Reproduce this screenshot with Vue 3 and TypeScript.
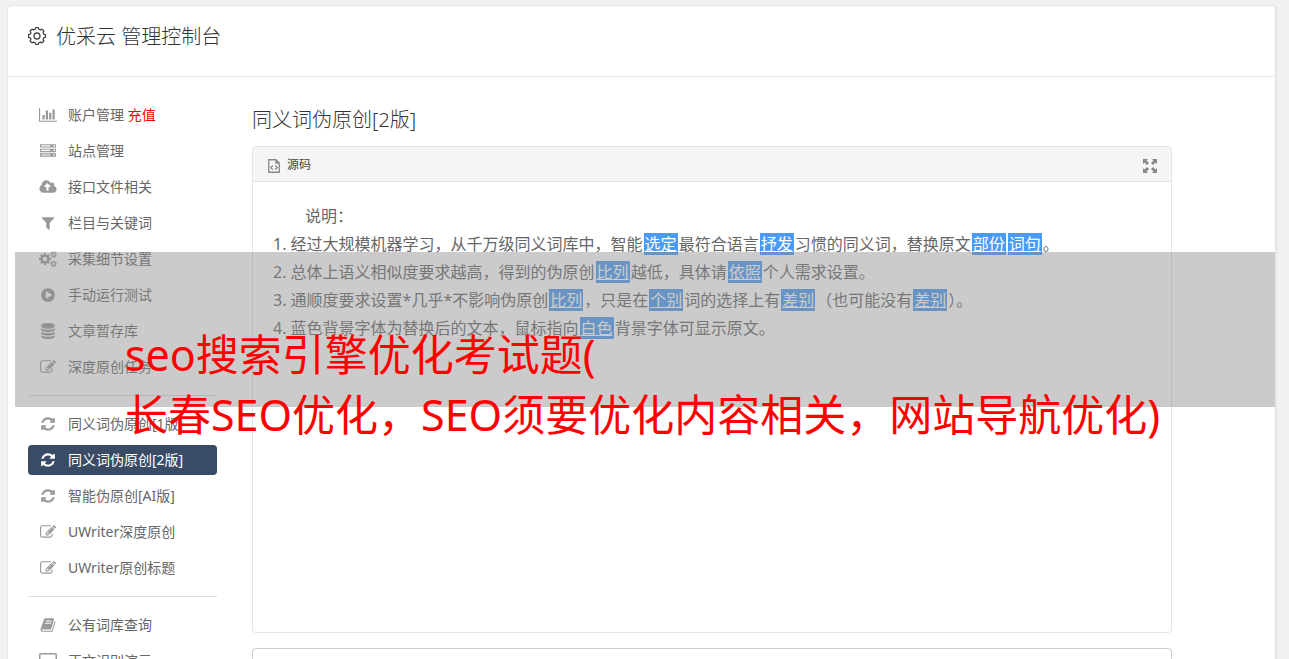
<script setup lang="ts">
interface Icon {
  box: string
  path: string
}
interface Item {
  icon: string
  label: string
  extra?: string
  active?: boolean
}
interface Segment {
  text: string
  replaced?: boolean
}

const icons: Record<string, Icon> = {
  chart: {
    box: '0 0 2048 1792',
    path: 'M640 896v512h-256v-512h256zm384-512v1024h-256v-1024h256zm1024 1152v128h-2048v-1536h128v1408h1920zm-640-896v768h-256v-768h256zm384-384v1152h-256v-1152h256z',
  },
  server: {
    box: '0 0 1792 1792',
    path: 'M128 1408h1024v-128h-1024v128zm0-512h1024v-128h-1024v128zm1568 448q0-40-28-68t-68-28-68 28-28 68 28 68 68 28 68-28 28-68zm-1568-960h1024v-128h-1024v128zm1568 448q0-40-28-68t-68-28-68 28-28 68 28 68 68 28 68-28 28-68zm0-512q0-40-28-68t-68-28-68 28-28 68 28 68 68 28 68-28 28-68zm96 832v384h-1792v-384h1792zm0-512v384h-1792v-384h1792zm0-512v384h-1792v-384h1792z',
  },
  upload: {
    box: '0 0 1920 1792',
    path: 'M1280 864q0-14-9-23l-352-352q-9-9-23-9t-23 9l-351 351q-10 12-10 24 0 14 9 23t23 9h224v352q0 13 9.5 22.5t22.5 9.5h192q13 0 22.5-9.5t9.5-22.5v-352h224q13 0 22.5-9.5t9.5-22.5zm640 288q0 159-112.5 271.5t-271.5 112.5h-1088q-185 0-316.5-131.5t-131.5-316.5q0-130 70-240t188-165q-2-30-2-43 0-212 150-362t362-150q156 0 285.5 87t188.5 231q71-62 166-62 106 0 181 75t75 181q0 76-41 138 130 31 213.5 135.5t83.5 238.5z',
  },
  filter: {
    box: '0 0 1792 1792',
    path: 'M1595 295q17 41-14 70l-493 493v742q0 42-39 59-13 5-25 5-27 0-45-19l-256-256q-19-19-19-45v-486l-493-493q-31-29-14-70 17-39 59-39h1280q42 0 59 39z',
  },
  play: {
    box: '0 0 1792 1792',
    path: 'M896 128q209 0 385.5 103t279.5 279.5 103 385.5-103 385.5-279.5 279.5-385.5 103-385.5-103-279.5-279.5-103-385.5 103-385.5 279.5-279.5 385.5-103zm384 823q32-18 32-55t-32-55l-544-320q-31-19-64-1-32 19-32 56v640q0 37 32 56 16 8 32 8 17 0 32-9z',
  },
  database: {
    box: '0 0 1792 1792',
    path: 'M896 768q237 0 443-43t325-127v170q0 69-103 128t-280 93.5-385 34.5-385-34.5-280-93.5-103-128v-170q119 84 325 127t443 43zm0 768q237 0 443-43t325-127v170q0 69-103 128t-280 93.5-385 34.5-385-34.5-280-93.5-103-128v-170q119 84 325 127t443 43zm0-384q237 0 443-43t325-127v170q0 69-103 128t-280 93.5-385 34.5-385-34.5-280-93.5-103-128v-170q119 84 325 127t443 43zm0-1152q208 0 385 34.5t280 93.5 103 128v128q0 69-103 128t-280 93.5-385 34.5-385-34.5-280-93.5-103-128v-128q0-69 103-128t280-93.5 385-34.5z',
  },
  edit: {
    box: '0 0 1792 1792',
    path: 'M888 1184l116-116-152-152-116 116v56h96v96h56zm440-720q-16-16-33 1l-350 350q-17 17-1 33t33-1l350-350q17-17 1-33zm80 594v190q0 119-84.5 203.5t-203.5 84.5h-832q-119 0-203.5-84.5t-84.5-203.5v-832q0-119 84.5-203.5t203.5-84.5h832q63 0 117 25 15 7 18 23 3 17-9 29l-49 49q-14 14-32 8-23-6-45-6h-832q-66 0-113 47t-47 113v832q0 66 47 113t113 47h832q66 0 113-47t47-113v-126q0-13 9-22l64-64q15-15 35-7t20 29zm-96-738l288 288-672 672h-288v-288zm444 132l-92 92-288-288 92-92q28-28 68-28t68 28l152 152q28 28 28 68t-28 68z',
  },
  refresh: {
    box: '0 0 1792 1792',
    path: 'M1639 1056q0 5-1 7-64 268-268 434.5t-478 166.5q-146 0-282.5-55t-243.5-157l-129 129q-19 19-45 19t-45-19-19-45v-448q0-26 19-45t45-19h448q26 0 45 19t19 45-19 45l-137 137q71 66 161 102t187 36q134 0 250-65t186-179q11-17 53-117 8-23 30-23h192q13 0 22.5 9.5t9.5 22.5zm25-800v448q0 26-19 45t-45 19h-448q-26 0-45-19t-19-45 19-45l138-138q-148-137-349-137-134 0-250 65t-186 179q-11 17-53 117-8 23-30 23h-199q-13 0-22.5-9.5t-9.5-22.5v-7q65-268 270-434.5t480-166.5q146 0 284 55.5t245 156.5l130-129q19-19 45-19t45 19 19 45z',
  },
  book: {
    box: '0 0 1792 1792',
    path: 'M1703 478q40 57 18 129l-275 906q-19 64-76.5 107.5t-122.5 43.5h-923q-77 0-148.5-53.5t-99.5-131.5q-24-67-2-127 0-4 3-27t4-37q1-8-3-21.5t-3-19.5q2-11 8-21t16.5-23.5 16.5-23.5q23-38 45-91.5t30-91.5q3-10 .5-30t-.5-28q3-11 17-28t17-23q21-36 42-92t25-90q1-9-2.5-32t.5-28q4-13 22-30.5t22-22.5q19-26 42.5-84.5t27.5-96.5q1-8-3-25.5t-2-26.5q2-8 9-18t18-23 17-21q8-12 16.5-30.5t15-35 16-36 19.5-32 26.5-23.5 36-11.5 47.5 5.5l-1 3q38-9 51-9h761q74 0 114 56t18 130l-274 906q-36 119-71.5 153.5t-128.5 34.5h-869q-27 0-38 15-11 16-1 43 24 70 144 70h923q29 0 56-15.5t35-41.5l300-987q7-22 5-57 38 15 59 43zm-1064 2q-4 13 2 22.5t20 9.5h608q13 0 25.5-9.5t16.5-22.5l21-64q4-13-2-22.5t-20-9.5h-608q-13 0-25.5 9.5t-16.5 22.5zm-83 256q-4 13 2 22.5t20 9.5h608q13 0 25.5-9.5t16.5-22.5l21-64q4-13-2-22.5t-20-9.5h-608q-13 0-25.5 9.5t-16.5 22.5z',
  },
  screen: {
    box: '0 0 18 16',
    path: 'M2 0h14q2 0 2 2v9q0 2-2 2h-5v1.500h2V16H5v-1.500h2V13H2q-2 0-2-2V2q0-2 2-2zm-.5 1.500v10h15v-10z',
  },
}

/** Outline of a cog whose teeth are evenly spread round (cx, cy). */
function cog(cx: number, cy: number, outer: number, inner: number, teeth: number): string {
  const points: string[] = []
  for (let i = 0; i < teeth; i++) {
    const base = (i / teeth) * Math.PI * 2
    const step = (Math.PI * 2) / teeth
    const corners: [number, number][] = [
      [-0.34, inner],
      [-0.2, outer],
      [0.2, outer],
      [0.34, inner],
    ]
    for (const [shift, radius] of corners) {
      const a = base + shift * step
      points.push(`${(cx + Math.cos(a) * radius).toFixed(2)} ${(cy + Math.sin(a) * radius).toFixed(2)}`)
    }
  }
  return `M${points.join('L')}Z`
}

function hole(cx: number, cy: number, r: number): string {
  return `M${cx - r} ${cy}a${r} ${r} 0 1 0 ${r * 2} 0a${r} ${r} 0 1 0 ${-r * 2} 0Z`
}

icons.cogs = {
  box: '0 0 18 16',
  path:
    cog(6, 8, 6, 4.500, 8) + hole(6, 8, 2.200) +
    cog(14.500, 3.500, 3.300, 2.400, 6) + hole(14.500, 3.500, 1.200) +
    cog(14.500, 12.800, 3.300, 2.400, 6) + hole(14.500, 12.800, 1.200),
}

const headerCog = cog(10, 10, 8.500, 7, 8)

const groups: Item[][] = [
  [
    { icon: 'chart', label: '账户管理', extra: '充值' },
    { icon: 'server', label: '站点管理' },
    { icon: 'upload', label: '接口文件相关' },
    { icon: 'filter', label: '栏目与关键词' },
    { icon: 'cogs', label: '采集细节设置' },
    { icon: 'play', label: '手动运行测试' },
    { icon: 'database', label: '文章暂存库' },
    { icon: 'edit', label: '深度原创任务' },
  ],
  [
    { icon: 'refresh', label: '同义词伪原创[1版]' },
    { icon: 'refresh', label: '同义词伪原创[2版]', active: true },
    { icon: 'refresh', label: '智能伪原创[AI版]' },
    { icon: 'edit', label: 'UWriter深度原创' },
    { icon: 'edit', label: 'UWriter原创标题' },
  ],
  [
    { icon: 'book', label: '公有词库查询' },
    { icon: 'screen', label: '正文识别演示' },
  ],
]

/** Words between braces are the ones that were replaced. */
function parse(line: string): Segment[] {
  return line
    .split(/(\{[^}]+\})/)
    .filter((part) => part !== '')
    .map((part) => (part.startsWith('{') ? { text: part.slice(1, -1), replaced: true } : { text: part }))
}

const lines: Segment[][] = [
  '1. 经过大规模机器学习，从千万级同义词库中，智能{选定}最符合语言{抒发}习惯的同义词，替换原文{部份}{词句}。',
  '2. 总体上语义相似度要求越高，得到的伪原创{比列}越低，具体请{依照}个人需求设置。',
  '3. 通顺度要求设置*几乎*不影响伪原创{比列}，只是在{个别}词的选择上有{差别}（也可能没有{差别}）。',
  '4. 蓝色背景字体为替换后的文本，鼠标指向{白色}背景字体可显示原文。',
].map(parse)
</script>

<template>
  <div class="page">
    <div class="card">
      <header class="header">
        <svg class="header-icon" viewBox="0 0 20 20" aria-hidden="true">
          <path :d="headerCog" />
          <circle cx="10" cy="10" r="3" />
        </svg>
        <h1>优采云 管理控制台</h1>
      </header>
      <div class="body">
        <nav class="sidebar">
          <ul v-for="(group, g) in groups" :key="g">
            <li v-for="item in group" :key="item.label">
              <a href="#" :class="{ active: item.active }">
                <svg :viewBox="icons[item.icon].box" aria-hidden="true">
                  <path :d="icons[item.icon].path" fill-rule="evenodd" />
                </svg>
                <span>{{ item.label }}<em v-if="item.extra">&nbsp;{{ item.extra }}</em></span>
              </a>
            </li>
          </ul>
        </nav>
        <main class="main">
          <h2>同义词伪原创[2版]</h2>
          <section class="editor">
            <div class="toolbar">
              <button type="button" class="source">
                <svg viewBox="0 0 12 14" aria-hidden="true">
                  <path d="M.75.75H8L11.250 4v9.250H.75zM8 .75V4h3.250M4.800 6.500L2.800 8.500l2 2M7.200 6.500l2 2-2 2" />
                </svg>
                <span>源码</span>
              </button>
              <button type="button" class="expand" aria-label="全屏">
                <svg viewBox="0 0 14 14" aria-hidden="true">
                  <path d="M0 0h5L3.500 1.500 6 4 4 6 1.500 3.500 0 5zM14 0v5l-1.500-1.500L10 6 8 4l2.500-2.500L9 0zM0 14V9l1.500 1.500L4 8l2 2-2.500 2.500L5 14zM14 14H9l1.500-1.500L8 10l2-2 2.500 2.500L14 9z" />
                </svg>
              </button>
            </div>
            <div class="content">
              <p class="intro">说明：</p>
              <p v-for="(line, i) in lines" :key="i">
                <template v-for="(part, j) in line" :key="j"><u v-if="part.replaced">{{ part.text }}</u><template v-else>{{ part.text }}</template></template>
              </p>
            </div>
          </section>
          <textarea class="input" aria-label="原文"></textarea>
        </main>
      </div>
    </div>
    <div class="banner">
      <p>seo搜索引擎优化考试题(</p>
      <p>长春SEO优化，SEO须要优化内容相关，网站导航优化)</p>
    </div>
  </div>
</template>

<style>
html {
  scrollbar-width: none;
}
body {
  margin: 0;
  background: #f1f1f1;
}
</style>

<style scoped>
.page {
  position: relative;
  height: 100vh;
  overflow: hidden;
  box-sizing: border-box;
  padding: 5px 12px 0 7px;
  color: #666;
  font-family: "Noto Sans", "Noto Sans CJK SC", sans-serif;
  font-size: 14px;
}
.card {
  min-height: 100vh;
  background: #fff;
  border: 1px solid #e5e5e5;
  border-right-width: 2px;
  border-radius: 5px;
}
.header {
  display: flex;
  align-items: center;
  gap: 9px;
  box-sizing: border-box;
  height: 71px;
  padding: 0 20px 8px 19px;
  border-bottom: 1px solid #e5e5e5;
}
.header-icon {
  width: 20px;
  height: 20px;
  margin-bottom: 3px;
  fill: none;
  stroke: #444;
  stroke-width: 1.300;
  stroke-linejoin: round;
}
h1,
h2 {
  margin: 0;
  color: #333;
  font-size: 20px;
  font-weight: 300;
  line-height: 28px;
}
.body {
  display: flex;
  gap: 35px;
  padding: 23px 103px 0 20px;
}
.sidebar {
  flex: 0 0 189px;
}
ul {
  display: flex;
  flex-direction: column;
  gap: 6px;
  margin: 0;
  padding: 0;
  list-style: none;
}
ul + ul {
  margin-top: 13px;
  padding-top: 13px;
  border-top: 1px solid #ddd;
}
.sidebar a {
  display: flex;
  align-items: center;
  gap: 11px;
  height: 30px;
  padding: 0 11px;
  border-radius: 4px;
  color: #666;
  line-height: 20px;
  text-decoration: none;
  white-space: nowrap;
}
.sidebar svg {
  flex: none;
  width: 18px;
  height: 16px;
  fill: #999;
}
.sidebar a.active {
  background: #3a4b66;
  color: #fff;
}
.sidebar a.active svg {
  fill: #fff;
}
em {
  color: #f00;
  font-style: normal;
}
.main {
  flex: 1;
  min-width: 0;
}
h2 {
  margin: 6px 0 12px;
}
.editor {
  border: 1px solid #e5e5e5;
  border-radius: 4px;
}
.toolbar {
  display: flex;
  align-items: center;
  justify-content: space-between;
  height: 34px;
  padding: 0 14px 0 15px;
  border-bottom: 1px solid #e5e5e5;
  border-radius: 4px 4px 0 0;
  background: #f5f5f5;
}
button {
  display: flex;
  align-items: center;
  gap: 7px;
  padding: 0;
  border: 0;
  background: none;
  color: #444;
  font: inherit;
  font-size: 12px;
}
.source svg {
  width: 12px;
  height: 14px;
  margin-top: 3px;
  fill: none;
  stroke: #888;
  stroke-width: 1.300;
}
.expand svg {
  width: 14px;
  height: 14px;
  margin-top: 3px;
  fill: #888;
}
.content {
  min-height: 410px;
  padding: 20px 20px 20px;
  font-size: 16px;
  line-height: 28px;
}
.content p {
  margin: 0;
}
.content .intro {
  text-indent: 2em;
}
u {
  margin: 0 1px;
  padding: 0 1px;
  background: #499bf5;
  color: #fff;
}
.input {
  display: block;
  box-sizing: border-box;
  width: 100%;
  height: 200px;
  margin: 15px 0 0;
  border: 1px solid #ccc;
  border-radius: 4px;
  background: #fff;
  resize: none;
}
.banner {
  position: absolute;
  top: 252px;
  right: 14px;
  left: 15px;
  box-sizing: border-box;
  height: 155px;
  padding: 73px 0 0 110px;
  background: rgba(140, 140, 140, 0.45);
  color: #f00;
  font-size: 43px;
  line-height: 60px;
  white-space: nowrap;
}
.banner p {
  margin: 0;
}
</style>
